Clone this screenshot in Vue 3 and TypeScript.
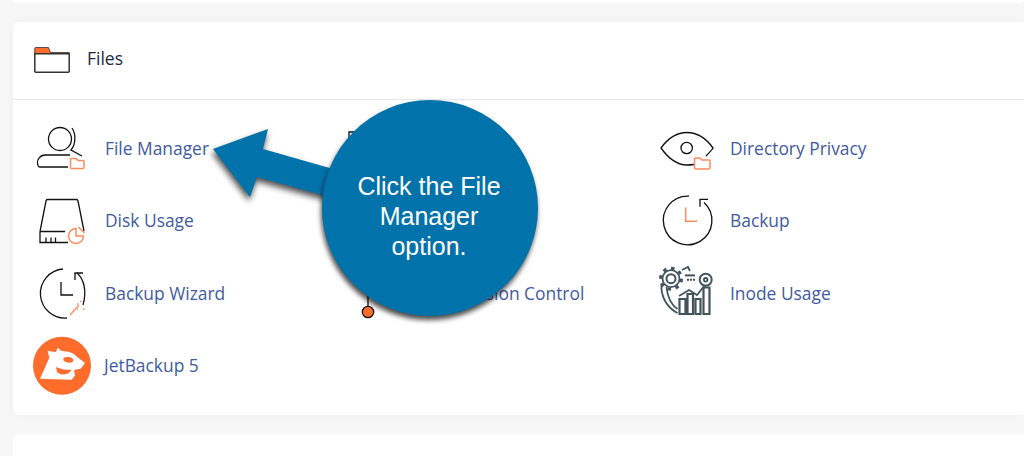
<script setup lang="ts">
// Files card of the hosting panel with a tutorial callout on top.
// Images and Web Disk sit fully behind the bubble, so they carry no label.
const tools = ['fm', 'img', 'priv', 'disk', 'web', 'bak', 'wiz', 'git', 'inode', 'jet']
const labels: Record<string, string> = {
  fm: 'File Manager',
  priv: 'Directory Privacy',
  disk: 'Disk Usage',
  bak: 'Backup',
  wiz: 'Backup Wizard',
  git: 'Git™ Version Control',
  inode: 'Inode Usage',
  jet: 'JetBackup 5',
}
</script>

<template>
  <div class="page">
    <div class="strip" />
    <section class="card">
      <header class="head">
        <svg class="head-icon" width="36" height="26" viewBox="0 0 36 26">
          <path d="M.5 7V1.500a1 1 0 0 1 1-1h13l2 5h19v2z" fill="#ff6c2c" />
          <path d="M.8 6.800h34.400v17.400a1 1 0 0 1-1 1H1.800a1 1 0 0 1-1-1z" fill="#fff" stroke="#333" stroke-width="1.500" />
          <path d="M.8 6V1.500a1 1 0 0 1 1-1h12.700l2 5h18.700V7" fill="none" stroke="#333" stroke-width=".8" />
        </svg>
        <h2>Files</h2>
      </header>
      <div class="grid">
        <a v-for="t in tools" :key="t" class="tool" :class="{ jet: t === 'jet' }">
          <svg class="ico" width="60" height="60" viewBox="0 0 60 60" fill="none" stroke="#111" stroke-width="1.300">
            <template v-if="t === 'fm'">
              <circle cx="27" cy="21" r="11.500" />
              <path d="M39 10c4 6 4 16-1 22l11 6" />
              <path d="M37 37H12c-5 0-8 5-7.500 8 .2 2 1 4 2 4H35" />
              <path class="acc" d="M37.500 49.500v-8a1 1 0 0 1 1-1h4.500l2 2h5a1 1 0 0 1 1 1v6a1 1 0 0 1-1 1h-11.500a1 1 0 0 1-1-1z" stroke-width="1.500" />
            </template>
            <path v-else-if="t === 'img'" d="M3 22v-8h9" />
            <template v-else-if="t === 'priv'">
              <path d="M36 46.500c-3 .4-5 .5-7 .5C16 47 8 37 3 30 8 23 16 14.500 29 14.500S50 23 55 30c-1.500 2.500-4 5-7 8" />
              <circle cx="28.700" cy="30" r="5.700" />
              <path class="acc" d="M36.500 50v-9a1 1 0 0 1 1-1h4.500l2 2h7a1 1 0 0 1 1 1v7a1 1 0 0 1-1 1h-13.500a1 1 0 0 1-1-1z" stroke-width="1.500" />
            </template>
            <template v-else-if="t === 'disk'">
              <path d="M7 41.500l6-30.500c.2-1 .6-1.500 1.500-1.500h29c.9 0 1.300.5 1.500 1.500l6 30" />
              <path d="M7 41.500h25M7 41.500v11h28M13 52.500v-5M18 52.500v-5M22.500 52.500v-5" />
              <path class="acc" d="M43 38.500a7.500 7.500 0 1 0 7.500 7.500H43z" stroke-width="1.500" />
              <path class="acc" d="M45.500 37l6 6" stroke-width="1.500" />
            </template>
            <template v-else-if="t === 'bak'">
              <path d="M31 6.200A24.300 24.300 0 1 0 46 12.500" />
              <path d="M50 9.300h-8v7.500" />
              <path class="acc" d="M27.700 17.500v13.700h11.500" stroke-width="1.500" />
            </template>
            <template v-else-if="t === 'wiz'">
              <path d="M30 6A24.500 24.500 0 1 0 34 55" />
              <path d="M44 10c7 6 10 18 6 32" />
              <path d="M50 10h-8v7" />
              <path d="M28 19v13h12" />
              <path class="acc" d="M37 52l9-10" stroke-width="1.200" />
              <path class="acc" d="M44 41h1.500M47 38.500h1.500M50 46h1.500M44 46h1" stroke-width="1.500" />
            </template>
            <template v-else-if="t === 'git'">
              <path d="M22 20v23" />
              <circle cx="22" cy="49" r="5.700" fill="#ff6c2c" />
            </template>
            <template v-else-if="t === 'inode'">
              <g stroke="#41545d">
                <circle cx="13" cy="15.700" r="4.500" stroke-width="2" />
                <circle cx="13" cy="15.700" r="8.500" stroke-width="1.800" />
                <circle cx="13" cy="15.700" r="10.500" stroke-width="3" stroke-dasharray="3.500 4.700" />
                <path d="M24 7l6-3 2 4" stroke-width="1.800" />
                <path d="M27 12.400h10" stroke-width="2" />
                <path d="M29 16.800h8" stroke-width="2" stroke-dasharray="2 1" />
                <circle cx="47.700" cy="16.800" r="6" stroke-width="2" />
                <circle cx="47.700" cy="16.800" r="1.800" stroke-width="1.800" />
                <path d="M3.500 21c-1 13 6 24 16 29" stroke-width="1.800" />
                <path d="M8.500 24c1 10 5 18 11 22" stroke-width="1.800" />
                <path d="M21 33l10-6 8 5 8-10" stroke-width="1.800" />
                <path d="M21.500 51V36h6v15zM29.500 51V31h5.500v20zM37.500 51V36h5v15zM45.500 51V24.500h6V51z" stroke-width="2.200" />
              </g>
            </template>
            <template v-else-if="t === 'jet'">
              <circle cx="29" cy="30.700" r="29" fill="#ff6c2c" stroke="none" />
              <path d="M7 43.800L16.300 22.800 14.700 16l8.300 1 1.700-4.200 4 3.200c4.500.3 8.500 1 11.600 2.700L52 28l-4.300 5.800-6.700 1.200 1 5.500-3.300 4.300z" fill="#fff" stroke="none" />
              <ellipse cx="35.300" cy="24.800" rx="5" ry="2.800" fill="#ff6c2c" stroke="none" transform="rotate(8 35.300 24.800)" />
              <path d="M23 32c5 2.500 10 3 15.700 2.800-1.500 3-5 4.600-8.400 4.600-2.500 0-5-1-6.300-2.400z" fill="#ff6c2c" stroke="none" />
            </template>
          </svg>
          <span v-if="labels[t]" class="label">{{ labels[t] }}</span>
        </a>
      </div>
    </section>
    <div class="next" />

    <svg class="arrow" width="132" height="92" viewBox="0 0 132 92">
      <path d="M1 32L56 12 51 32l77 22-7 27-76-21-7 20z" fill="#0272aa" />
    </svg>
    <div class="bubble">Click the File Manager option.</div>
  </div>
</template>

<style>
html, body {
  margin: 0;
  background: #f7f7f7;
  overflow: hidden;
}
</style>

<style scoped>
.page {
  position: relative;
  height: 456px;
  overflow: hidden;
  padding-left: 13px;
  font-family: "Open Sans", sans-serif;
  background: #f7f7f7;
}
.strip {
  height: 3px;
  background: #fff;
  margin-bottom: 19px;
  border-radius: 0 0 6px 6px;
}
.card {
  height: 393px;
  background: #fff;
  border-radius: 6px 0 0 6px;
  box-shadow: 0 0 12px rgba(0, 0, 0, 0.03);
}
.head {
  height: 78px;
  box-sizing: border-box;
  border-bottom: 1px solid #e8e8ee;
  display: flex;
  align-items: center;
  padding: 0 0 6px 21px;
  gap: 17px;
}
.head-icon {
  flex: none;
  margin-top: 4px;
}
h2 {
  margin: 0;
  font-size: 17.500px;
  font-weight: 400;
  color: #1b2b45;
}
.grid {
  display: grid;
  grid-template-columns: repeat(3, 312.500px);
  grid-auto-rows: 72.500px;
  padding: 11.700px 0 0 20px;
}
.tool {
  display: flex;
  align-items: center;
  gap: 12px;
  min-width: 0;
}
.tool.jet {
  gap: 11px;
}
.ico {
  flex: none;
}
.acc {
  stroke: #ff8a5c;
}
.label {
  font-size: 17.400px;
  color: #3f5ba0;
  white-space: nowrap;
}
.next {
  height: 40px;
  margin-top: 19px;
  background: #fff;
  border-radius: 6px 0 0 0;
}
.arrow {
  position: absolute;
  left: 212px;
  top: 117px;
  filter: drop-shadow(-1px 4px 3px rgba(0, 0, 0, 0.7));
}
.bubble {
  position: absolute;
  left: 322px;
  top: 100px;
  width: 216px;
  height: 216px;
  box-sizing: border-box;
  padding: 16px 31px 0 29px;
  border-radius: 50%;
  background: #0272aa;
  box-shadow: -1px 4px 5px rgba(0, 0, 0, 0.7);
  display: flex;
  align-items: center;
  justify-content: center;
  text-align: center;
  font-family: "Liberation Sans", Arial, sans-serif;
  font-size: 25px;
  line-height: 30px;
  color: #fff;
}
</style>
